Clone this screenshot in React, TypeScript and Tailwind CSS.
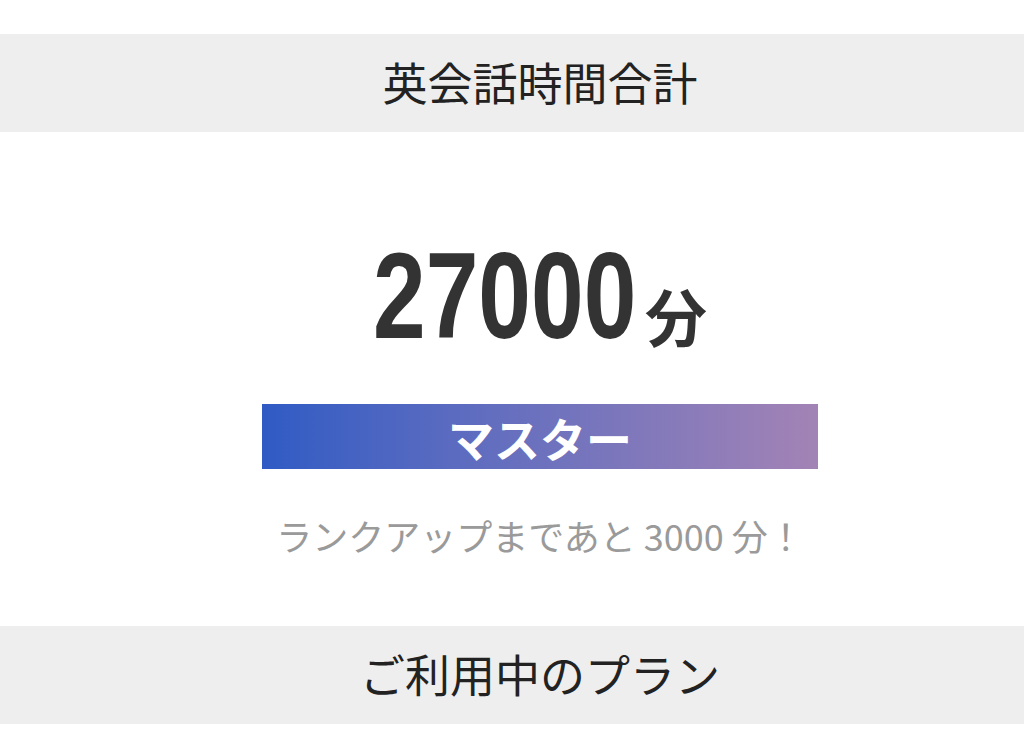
import React from 'react';

const jp = { fontFamily: '"Noto Sans CJK JP", "Noto Sans", sans-serif' };

function SectionHeader({ title }: { title: string }) {
    return (
        <div className="h-[98px] bg-[#eeeeee] flex items-center justify-center pl-[56px] pb-[4px]">
            <h2 className="text-[45px] leading-none text-[#222222]" style={jp}>{title}</h2>
        </div>
    );
}

export default function App() {
    const total = 27000;
    const remaining = 3000;

    return (
        <div className="min-h-screen bg-white pt-[34px]" style={jp}>
            <SectionHeader title="英会話時間合計" />

            <div className="h-[494px] flex flex-col items-center pt-[109px] pl-[56px]">
                <div className="flex items-end h-[110px]">
                    {/* condensed display digits */}
                    <div className="w-[263px] h-[110px] overflow-visible">
                        <span
                            className="inline-block origin-left scale-x-[0.77] whitespace-nowrap text-[123px] leading-[110px] font-bold text-[#333333]"
                            style={{ fontFamily: '"Liberation Sans", Arial, sans-serif' }}
                        >
                            {total}
                        </span>
                    </div>
                    <span className="ml-[9px] mb-[5px] text-[62px] leading-none font-bold text-[#333333]">分</span>
                </div>

                <div className="mt-[53px] w-[556px] h-[65px] bg-gradient-to-r from-[#2f5bc4] to-[#a383b5] flex items-center justify-center">
                    <span className="text-[46px] leading-none font-semibold text-white">マスター</span>
                </div>

                <p className="mt-[48px] text-[36px] leading-none text-[#9a9a9a]">
                    ランクアップまであと {remaining} 分！
                </p>
            </div>

            <SectionHeader title="ご利用中のプラン" />
        </div>
    );
}
